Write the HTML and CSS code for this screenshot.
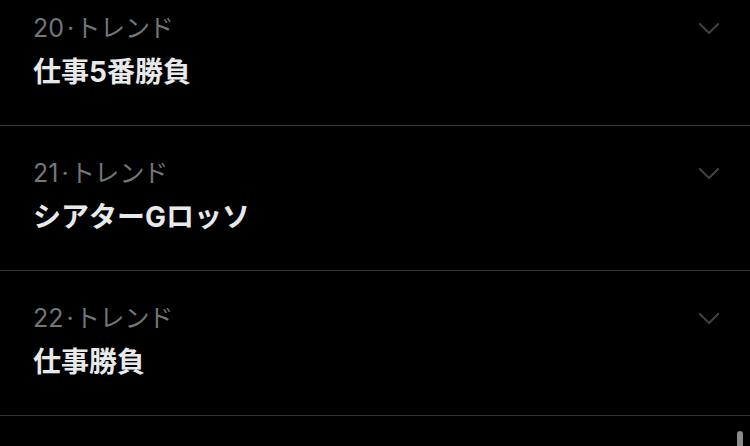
FILE: index.html
```html
<!DOCTYPE html>
<html lang="ja">
<head>
    <meta charset="UTF-8">
    <meta name="viewport" content="width=device-width, initial-scale=1.0">
    <title>トレンド</title>
    <link rel="stylesheet" href="styles.css">
</head>
<body>
    <ul class="trend-list">
        <li class="trend">
            <div class="trend-body">
                <div class="trend-meta">20<span class="dot">·</span><span class="label">トレンド</span></div>
                <div class="trend-title">仕事5番勝負</div>
            </div>
            <svg class="chevron" viewBox="0 0 24 14" fill="none" stroke="currentColor" stroke-width="2.2" stroke-linecap="round" stroke-linejoin="round">
                <polyline points="2,2 12,12 22,2"></polyline>
            </svg>
        </li>
        <li class="trend">
            <div class="trend-body">
                <div class="trend-meta">21<span class="dot">·</span><span class="label">トレンド</span></div>
                <div class="trend-title">シアターGロッソ</div>
            </div>
            <svg class="chevron" viewBox="0 0 24 14" fill="none" stroke="currentColor" stroke-width="2.2" stroke-linecap="round" stroke-linejoin="round">
                <polyline points="2,2 12,12 22,2"></polyline>
            </svg>
        </li>
        <li class="trend">
            <div class="trend-body">
                <div class="trend-meta">22<span class="dot">·</span><span class="label">トレンド</span></div>
                <div class="trend-title">仕事勝負</div>
            </div>
            <svg class="chevron" viewBox="0 0 24 14" fill="none" stroke="currentColor" stroke-width="2.2" stroke-linecap="round" stroke-linejoin="round">
                <polyline points="2,2 12,12 22,2"></polyline>
            </svg>
        </li>
    </ul>
    <div class="scroll-thumb"></div>
</body>
</html>
```

FILE: styles.css
```css
body {
    margin: 0;
    padding: 0;
    background-color: #000;
    font-family: "Inter", "Noto Sans CJK JP", sans-serif;
    overflow: hidden;
    height: 446px;
}

.trend-list {
    list-style: none;
    margin: -19px 0 0;
    padding: 0;
}

.trend {
    display: flex;
    align-items: flex-start;
    height: 144px;
    border-bottom: 1px solid #2f3336;
    padding: 0 30px 0 33px;
    box-sizing: content-box;
}

.trend-body {
    flex: 1;
    padding-top: 30px;
}

.trend-meta {
    color: #71767b;
    font-size: 25px;
    line-height: 34px;
}

.trend-meta .dot {
    margin: 0 5px 0 3px;
}

.trend-meta .label {
    font-feature-settings: "palt";
    letter-spacing: 3px;
}

.trend-title {
    color: #e7e9ea;
    font-size: 28px;
    font-weight: 700;
    line-height: 40px;
    margin-top: 7px;
}

.chevron {
    width: 22px;
    height: 13px;
    margin-top: 41px;
    color: #3e4246;
}

.scroll-thumb {
    position: absolute;
    right: 7px;
    top: 431px;
    width: 6px;
    height: 30px;
    border-radius: 3px;
    background-color: #8a8a8a;
}
```
